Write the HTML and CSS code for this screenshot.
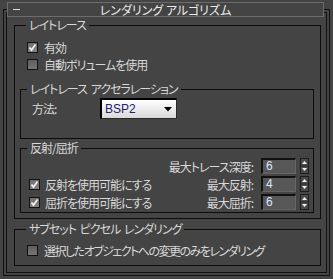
FILE: index.html
```html
<!DOCTYPE html>
<html lang="ja">
<head>
  <meta charset="UTF-8" />
  <title>レンダリング アルゴリズム</title>
  <link rel="stylesheet" href="styles.css">
</head>
<body>
  <div class="header">
    <span class="collapse"></span>
    <span class="header-title">レンダリング アルゴリズム</span>
  </div>

  <div class="rollout">
    <div class="rollout-body">

      <div class="group group-raytrace">
        <div class="group-title">レイトレース</div>
        <label class="check-row first-row">
          <span class="checkbox is-checked"><svg width="9" height="9" viewBox="0 0 9 9"><polyline points="1.5,4.5 3.5,7 7.5,1.5" /></svg></span>
          有効
        </label>
        <label class="check-row">
          <span class="checkbox"></span>
          自動ボリュームを使用
        </label>

        <div class="group group-accel">
          <div class="group-title">レイトレース アクセラレーション</div>
          <div class="method-row">
            <span class="method-label">方法:</span>
            <div class="dropdown">
              <span class="dropdown-value">BSP2</span>
              <svg width="8" height="5" viewBox="0 0 8 5"><polygon points="0,0 8,0 4,4.5" /></svg>
            </div>
          </div>
        </div>

        <div class="group group-reflect">
          <div class="group-title">反射/屈折</div>
          <div class="param-grid">
            <span></span>
            <span class="param-label">最大トレース深度:</span>
            <span class="spin-field">6</span>
            <svg class="spinner" width="9" height="16" viewBox="0 0 9 16"><rect x="0.5" y="0.5" width="8" height="15" /><line x1="1" y1="8" x2="8" y2="8" /><polygon points="2,6 7,6 4.5,3" /><polygon points="2,10 7,10 4.5,13" /></svg>

            <label class="grid-check">
              <span class="checkbox is-checked"><svg width="9" height="9" viewBox="0 0 9 9"><polyline points="1.5,4.5 3.5,7 7.5,1.5" /></svg></span>
              反射を使用可能にする
            </label>
            <span class="param-label">最大反射:</span>
            <span class="spin-field">4</span>
            <svg class="spinner" width="9" height="16" viewBox="0 0 9 16"><rect x="0.5" y="0.5" width="8" height="15" /><line x1="1" y1="8" x2="8" y2="8" /><polygon points="2,6 7,6 4.5,3" /><polygon points="2,10 7,10 4.5,13" /></svg>

            <label class="grid-check">
              <span class="checkbox is-checked"><svg width="9" height="9" viewBox="0 0 9 9"><polyline points="1.5,4.5 3.5,7 7.5,1.5" /></svg></span>
              屈折を使用可能にする
            </label>
            <span class="param-label">最大屈折:</span>
            <span class="spin-field">6</span>
            <svg class="spinner" width="9" height="16" viewBox="0 0 9 16"><rect x="0.5" y="0.5" width="8" height="15" /><line x1="1" y1="8" x2="8" y2="8" /><polygon points="2,6 7,6 4.5,3" /><polygon points="2,10 7,10 4.5,13" /></svg>
          </div>
        </div>
      </div>

      <div class="group group-subset">
        <div class="group-title">サブセット ピクセル レンダリング</div>
        <label class="check-row subset-row">
          <span class="checkbox"></span>
          <span class="tight">選択したオブジェクトへの変更のみをレンダリング</span>
        </label>
      </div>

    </div>
  </div>
</body>
</html>
```

FILE: styles.css
```css
body {
  margin: 0;
  padding-top: 2px;
  background: #444;
  font-family: "Noto Sans CJK JP", sans-serif;
  font-size: 12px;
  font-feature-settings: "palt";
  letter-spacing: -1px;
  color: #d8d8d8;
  white-space: nowrap;
}

/* rollout header */
.header {
  position: relative;
  z-index: 1;
  display: grid;
  grid-template-columns: 20px 1fr 20px;
  align-items: center;
  height: 13px;
  margin: 0 9px -8px 7px;
  border: 1px solid #6c6c6c;
  background: #444;
}
.collapse {
  width: 7px;
  height: 1px;
  margin-left: 5px;
  background: #e0e0e0;
}
.header-title {
  text-align: center;
  line-height: 13px;
  letter-spacing: 0;
  color: #ececec;
}

.rollout {
  margin: 0 3px;
  padding: 2px;
  border: 1px solid #111;
}
.rollout-body {
  padding: 0 5px 6px 7px;
  border: 1px solid #111;
}

/* group boxes */
.group {
  border: 1px solid #0c0c0c;
}
.group-title {
  width: fit-content;
  height: 14px;
  line-height: 14px;
  margin: -8px 0 0 6px;
  padding: 0 3px;
  word-spacing: 2px;
  background: #444;
}
.group-raytrace {
  margin-top: 12px;
  padding: 0 6px 5px 5px;
}
.group-accel { margin-top: 16px; }
.group-reflect { margin-top: 9px; }
.group-subset {
  margin-top: 10px;
  padding: 0 0 6px 5px;
}

/* checkboxes */
.check-row {
  display: flex;
  align-items: center;
  gap: 6px;
  height: 17px;
  padding-left: 7px;
}
.first-row { margin-top: 7px; }
.subset-row { margin-top: 6px; }
.tight { letter-spacing: -1.5px; }
.checkbox {
  flex: none;
  display: flex;
  align-items: center;
  justify-content: center;
  width: 11px;
  height: 11px;
  box-sizing: border-box;
  border: 1px solid #121212;
  background: linear-gradient(#5e5e5e, #757575);
}
.checkbox.is-checked {
  background: linear-gradient(#6e6e6e, #858585);
}
.checkbox svg polyline {
  fill: none;
  stroke: #f4f4f4;
  stroke-width: 1.7;
}

/* method dropdown */
.method-row {
  display: flex;
  align-items: center;
  margin-top: 2px;
  padding: 0 0 19px 11px;
}
.method-label { width: 68px; }
.dropdown {
  display: flex;
  align-items: center;
  justify-content: space-between;
  width: 77px;
  height: 21px;
  box-sizing: border-box;
  padding: 0 4px 0 3px;
  border-style: solid;
  border-width: 2px 1px 1px 2px;
  border-color: #000 #2a2a2a #2a2a2a #000;
  background: linear-gradient(#ffffff, #d9d9d9);
}
.dropdown-value {
  font-family: "Liberation Sans", sans-serif;
  font-size: 12px;
  letter-spacing: 0;
  color: #1a2470;
}
.dropdown svg polygon { fill: #000; }

/* reflect / refract parameters */
.param-grid {
  display: grid;
  grid-template-columns: minmax(0, 1fr) auto 39px 9px;
  grid-auto-rows: 16px;
  row-gap: 2px;
  align-items: center;
  margin-top: 3px;
  padding: 0 4px 2px 8px;
}
.grid-check {
  display: flex;
  align-items: center;
  gap: 5px;
}
.param-label {
  margin-right: 8px;
  text-align: right;
}
.spin-field {
  height: 16px;
  margin-right: 4px;
  box-sizing: border-box;
  padding-left: 3px;
  border-style: solid;
  border-width: 2px 1px 1px 2px;
  border-color: #111 #666 #666 #111;
  background: #575757;
  font-family: "Liberation Sans", sans-serif;
  line-height: 13px;
  letter-spacing: 0;
  color: #dce6ff;
}
.spinner rect {
  fill: #4a4a4a;
  stroke: #1c1c1c;
}
.spinner line { stroke: #2a2a2a; }
.spinner polygon { fill: #f0f0f0; }
```
